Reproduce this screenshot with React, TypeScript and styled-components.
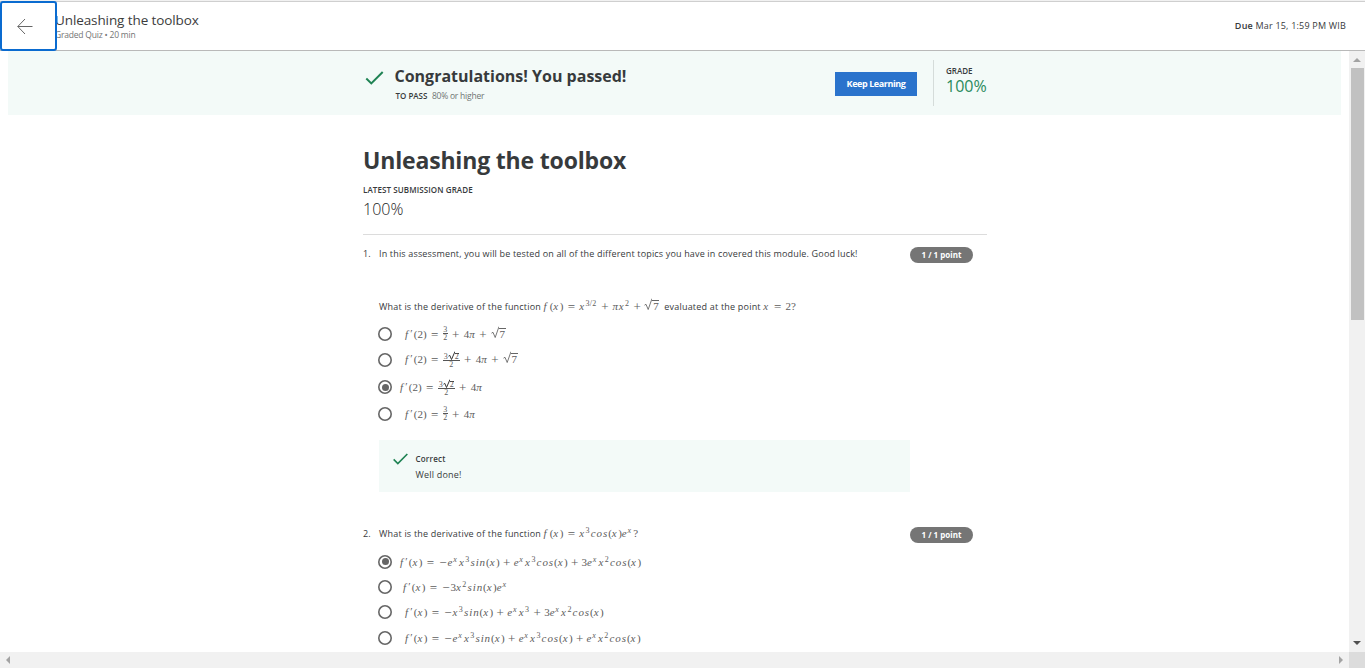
import React from 'react';
import styled, { createGlobalStyle } from 'styled-components';

const Global = createGlobalStyle`
  * { box-sizing: border-box; }
  html, body { margin: 0; padding: 0; overflow: hidden; background: #fff; }
  body { font-family: "Open Sans", "Noto Sans", sans-serif; color: #373a3c; }
`;

const Page = styled.div`
  width: 1365px;
  height: 668px;
  display: flex;
  flex-direction: column;
  overflow: hidden;
`;
const Header = styled.header`
  height: 51px;
  flex: none;
  display: flex;
  align-items: stretch;
  border-top: 1px solid #f1f1f1;
  border-bottom: 1px solid #b9b9b9;
  box-shadow: inset 0 1px 0 #cfcfcf;
`;
const BackButton = styled.button`
  width: 57px;
  height: 50px;
  flex: none;
  margin: 0;
  padding: 0 0 0 15px;
  display: flex;
  align-items: center;
  background: #fff;
  border: 2px solid #0a6bd0;
  border-radius: 3px;
  position: relative;
  z-index: 2;
`;
const HeaderTitles = styled.div`
  flex: 1;
  margin-left: -2px;
  padding-top: 10px;
`;
const Text = styled.div<{ $size: number; $line: number; $weight?: number; $color?: string; $ls?: number }>`
  font-size: ${p => p.$size}px;
  line-height: ${p => p.$line}px;
  font-weight: ${p => p.$weight ?? 400};
  color: ${p => p.$color ?? '#373a3c'};
  letter-spacing: ${p => p.$ls ?? 0}px;
  white-space: nowrap;
`;
const Due = styled(Text)`
  padding: 18px 19px 0 0;
  b { font-weight: 600; }
`;
const Middle = styled.div`
  display: flex;
  height: 601px;
`;
const Scroller = styled.main`
  width: 1349px;
  padding: 0 8px;
  overflow: hidden;
`;
const Banner = styled.section`
  height: 64px;
  background: #f3faf8;
  display: flex;
  padding-left: 357px;
`;
const CheckHolder = styled.div<{ $top: number; $width: number }>`
  width: ${p => p.$width}px;
  padding-top: ${p => p.$top}px;
  line-height: 0;
  flex: none;
`;
const Message = styled.div`
  width: 440.5px;
  padding-top: 13px;
`;
const PassLine = styled.div`
  display: flex;
  gap: 4.5px;
  padding: 3px 0 0 1px;
`;
const KeepButton = styled.button`
  margin: 21px 16px 0 0;
  width: 82px;
  height: 24px;
  flex: none;
  border: 0;
  padding: 0;
  background: #2a73cc;
  color: #fff;
  font: 700 9px/24px "Open Sans", sans-serif;
  letter-spacing: -0.42px;
  white-space: nowrap;
`;
const Grade = styled.div`
  margin-top: 9px;
  height: 46px;
  border-left: 1px solid #d5dcda;
  padding: 5px 0 0 12px;
`;
const Column = styled.div`
  width: 624px;
  margin-left: 355px;
  padding-top: 29px;
`;
const Summary = styled.div`
  height: 91px;
  border-bottom: 1px solid #dcdcdc;
`;
const Question = styled.article<{ $height: number }>`
  display: flex;
  height: ${p => p.$height}px;
  padding-top: 11px;
`;
const QuestionNumber = styled(Text)`
  width: 16px;
  flex: none;
`;
const Body = styled.div`
  width: 531px;
  flex: none;
`;
const Pill = styled.div`
  margin-top: 1px;
  width: 63px;
  height: 16px;
  border-radius: 8px;
  background: #757575;
  color: #fff;
  text-align: center;
  font-size: 8px;
  line-height: 16px;
  font-weight: 700;
`;
const Prompt = styled.div<{ $top?: number; $bottom?: number }>`
  display: flex;
  align-items: baseline;
  height: 16px;
  margin-top: ${p => p.$top ?? 0}px;
  margin-bottom: ${p => p.$bottom ?? 0}px;
`;
const Option = styled.label<{ $h: number; $gap: number }>`
  height: ${p => p.$h}px;
  display: flex;
  align-items: center;
  gap: ${p => p.$gap}px;
`;
const Ring = styled.span`
  width: 14px;
  height: 14px;
  flex: none;
  margin-left: -1px;
  border-radius: 50%;
  box-shadow: inset 0 0 0 1.6px #666;
  display: flex;
  align-items: center;
  justify-content: center;
`;
const Dot = styled.span`
  width: 7px;
  height: 7px;
  border-radius: 50%;
  background: #666;
`;
const Feedback = styled.div`
  margin-top: 15px;
  height: 52px;
  background: #f3faf8;
  display: flex;
  padding-left: 14px;
`;
const FeedbackText = styled.div`
  padding-top: 12px;
`;

/* Formula pieces */
const Formula = styled.span`
  display: inline-flex;
  align-items: baseline;
  white-space: pre;
  font: 11px/16px "Liberation Serif", serif;
  color: #5c5c5c;
`;
const V = styled.i<{ $ls?: number }>`
  letter-spacing: ${p => p.$ls ?? 0.8}px;
`;
const Sup = styled.span<{ $italic?: boolean }>`
  font-size: 8px;
  line-height: 8px;
  position: relative;
  top: -4px;
  letter-spacing: 0.2px;
  margin-right: ${p => (p.$italic ? 2 : 1)}px;
  font-style: ${p => (p.$italic ? 'italic' : 'normal')};
`;
const Prime = styled.span`
  width: 5px;
  text-align: center;
  position: relative;
  top: -1px;
`;
const Operator = styled.span<{ $w?: number }>`
  width: ${p => p.$w ?? 16}px;
  text-align: center;
  font-size: 13px;
  line-height: 14px;
  position: relative;
  top: 1px;
`;
const Fraction = styled.span<{ $w: number }>`
  width: ${p => p.$w}px;
  display: inline-flex;
  flex-direction: column;
  align-items: center;
  align-self: center;
  font-size: 8px;
  line-height: 7px;
`;
const Numerator = styled.span`
  width: 100%;
  display: flex;
  align-items: flex-end;
  justify-content: center;
  border-bottom: 1px solid #555;
`;
const RootBody = styled.span`
  line-height: 10px;
  border-top: 1px solid #666;
  padding: 0 0.5px 0 1px;
`;
const RootWrap = styled.span`
  display: inline-flex;
  align-items: baseline;
`;
const SmallRootBody = styled.span`
  border-top: 1px solid #444;
  line-height: 6px;
`;

const Root = ({ children }: { children: React.ReactNode }) => (
  <RootWrap>
    <svg width="8" height="12" viewBox="0 0 8 12" fill="none" stroke="#555" strokeWidth="0.8">
      <path d="M.5 7.2 2 6.3 4.2 11.5 8 .6" />
    </svg>
    <RootBody>{children}</RootBody>
  </RootWrap>
);
const ThreeRootTwoOverTwo = () => (
  <Fraction $w={17}>
    <Numerator>
      3
      <svg width="7" height="9" viewBox="0 0 7 9" fill="none" stroke="#333" strokeWidth="1">
        <path d="M.5 5.2 1.8 4.4 3.5 8.5 7 .5" />
      </svg>
      <SmallRootBody>2</SmallRootBody>
    </Numerator>
    2
  </Fraction>
);
const ThreeHalves = () => (
  <Fraction $w={5}>
    <Numerator>3</Numerator>2
  </Fraction>
);
const X = () => <V $ls={1.4}>x</V>;
const Fx = ({ arg, prime = true }: { arg?: string; prime?: boolean }) => (
  <>
    <V $ls={prime ? 0.8 : 3}>f</V>
    {prime && <Prime>′</Prime>}({arg ?? <X />})
  </>
);
const Ex = () => (
  <>
    <V>e</V>
    <Sup $italic>x</Sup>
  </>
);
const Xn = ({ n }: { n: string }) => (
  <>
    <X />
    <Sup>{n}</Sup>
  </>
);
const Trig = ({ name }: { name: string }) => (
  <>
    <V $ls={0.9}>{name}</V>(<X />)
  </>
);
const Eq = ({ w }: { w?: number }) => <Operator $w={w}>=</Operator>;
const Plus = ({ w }: { w?: number }) => <Operator $w={w}>+</Operator>;
const Minus = () => <Operator $w={9}>−</Operator>;

const Check = ({ w, h }: { w: number; h: number }) => (
  <svg width={w} height={h} viewBox="0 0 18 14" fill="none" stroke="#1f8354" strokeWidth="2">
    <path d="M.8 7.5 5.8 12.4 17.2 1" />
  </svg>
);

const Radio = ({ on, h, gap, children }: { on?: boolean; h: number; gap: number; children: React.ReactNode }) => (
  <Option $h={h} $gap={gap}>
    <Ring>{on && <Dot />}</Ring>
    {children}
  </Option>
);

/* Scrollbars */
const VBar = styled.div`
  width: 16px;
  background: #f1f1f1;
  display: flex;
  flex-direction: column;
  align-items: center;
`;
const VArrow = styled.div`
  height: 17px;
  width: 16px;
  display: flex;
  align-items: center;
  justify-content: center;
`;
const VThumb = styled.div`
  width: 13px;
  height: 252px;
  margin: 0 0 314px 1px;
  background: #c1c1c1;
`;
const HBar = styled.div`
  height: 16px;
  display: flex;
  background: #f1f1f1;
`;
const HTrack = styled.div`
  width: 1349px;
  padding: 0 6px;
  display: flex;
  justify-content: space-between;
  align-items: center;
`;
const Corner = styled.div`
  width: 16px;
  background: #dcdcdc;
`;

export default function App() {
  return (
    <Page>
      <Global />
      <Header>
        <BackButton aria-label="Back">
          <svg width="16" height="17" viewBox="0 0 16 17" fill="none" stroke="#666" strokeWidth="1">
            <path d="M15.5 8.5H.8M8 1 .8 8.5 8 16" />
          </svg>
        </BackButton>
        <HeaderTitles>
          <Text $size={13.5} $line={19} $color="#3c3c3c" $ls={-0.1}>Unleashing the toolbox</Text>
          <Text $size={8.5} $line={9} $color="#757575" $ls={-0.2}>Graded Quiz • 20 min</Text>
        </HeaderTitles>
        <Due $size={9} $line={14} $ls={0.2}><b>Due</b> Mar 15, 1:59 PM WIB</Due>
      </Header>
      <Middle>
        <Scroller>
          <Banner>
            <CheckHolder $top={20} $width={29.5}><Check w={19} h={14} /></CheckHolder>
            <Message>
              <Text $size={16} $line={24} $weight={700}>Congratulations! You passed!</Text>
              <PassLine>
                <Text $size={8} $line={10} $weight={600}>TO PASS</Text>
                <Text $size={8.5} $line={10} $color="#6f7573" $ls={-0.22}>80% or higher</Text>
              </PassLine>
            </Message>
            <KeepButton>Keep Learning</KeepButton>
            <Grade>
              <Text $size={8} $line={12} $weight={600}>GRADE</Text>
              <Text $size={16} $line={18} $color="#2a8a5c">100%</Text>
            </Grade>
          </Banner>
          <Column>
            <Summary>
              <Text $size={23} $line={32} $weight={700} $ls={-0.17}>Unleashing the toolbox</Text>
              <Text $size={8} $line={28} $weight={600} $ls={0.1}>LATEST SUBMISSION GRADE</Text>
              <Text $size={16} $line={10} $weight={300} $color="#222">100%</Text>
            </Summary>
            <Question $height={280}>
              <QuestionNumber $size={9} $line={16}>1.</QuestionNumber>
              <Body>
                <Prompt><Text $size={9} $line={16} $ls={0.16}>In this assessment, you will be tested on all of the different topics you have in covered this module. Good luck!</Text></Prompt>
                <Prompt $top={36} $bottom={6}>
                  <Text $size={9} $line={16} $ls={0.2}>What is the derivative of the function&nbsp;</Text>
                  <Formula>
                    <Fx prime={false} /><Eq /><Xn n="3/2" /><Plus w={15} /><V>π</V><Xn n="2" /><Plus w={14} /><Root>7</Root>
                  </Formula>
                  <Text $size={9} $line={16} $ls={0.2}>&nbsp; evaluated at the point&nbsp;</Text>
                  <Formula><X /><Eq />2?</Formula>
                </Prompt>
                <Radio h={27} gap={13}><Formula><Fx arg="2" /><Eq /><ThreeHalves /><Plus />4<V>π</V><Plus w={15} /><Root>7</Root></Formula></Radio>
                <Radio h={25} gap={13}><Formula><Fx arg="2" /><Eq /><ThreeRootTwoOverTwo /><Plus />4<V>π</V><Plus w={15} /><Root>7</Root></Formula></Radio>
                <Radio on h={30} gap={8}><Formula><Fx arg="2" /><Eq /><ThreeRootTwoOverTwo /><Plus />4<V>π</V></Formula></Radio>
                <Radio h={23} gap={13}><Formula><Fx arg="2" /><Eq /><ThreeHalves /><Plus />4<V>π</V></Formula></Radio>
                <Feedback>
                  <CheckHolder $top={13} $width={22.5}><Check w={15} h={12} /></CheckHolder>
                  <FeedbackText>
                    <Text $size={8} $line={14} $weight={600} $ls={0.2}>Correct</Text>
                    <Text $size={9} $line={18} $ls={0.2}>Well done!</Text>
                  </FeedbackText>
                </Feedback>
              </Body>
              <Pill>1 / 1 point</Pill>
            </Question>
            <Question $height={160}>
              <QuestionNumber $size={9} $line={16}>2.</QuestionNumber>
              <Body>
                <Prompt $top={-1} $bottom={8}>
                  <Text $size={9} $line={16} $ls={0.2}>What is the derivative of the function&nbsp;</Text>
                  <Formula><Fx prime={false} /><Eq /><Xn n="3" /><Trig name="cos" /><Ex />?</Formula>
                </Prompt>
                <Radio on h={25} gap={8}><Formula><Fx /><Eq /><Minus /><Ex /><Xn n="3" /><Trig name="sin" /><Plus w={14} /><Ex /><Xn n="3" /><Trig name="cos" /><Plus w={14} />3<Ex /><Xn n="2" /><Trig name="cos" /></Formula></Radio>
                <Radio h={25} gap={11}><Formula><Fx /><Eq /><Minus />3<Xn n="2" /><Trig name="sin" /><Ex /></Formula></Radio>
                <Radio h={25} gap={13}><Formula><Fx /><Eq /><Minus /><Xn n="3" /><Trig name="sin" /><Plus w={14} /><Ex /><Xn n="3" /><Plus w={14} />3<Ex /><Xn n="2" /><Trig name="cos" /></Formula></Radio>
                <Radio h={27} gap={13}><Formula><Fx /><Eq /><Minus /><Ex /><Xn n="3" /><Trig name="sin" /><Plus w={14} /><Ex /><Xn n="3" /><Trig name="cos" /><Plus w={14} /><Ex /><Xn n="2" /><Trig name="cos" /></Formula></Radio>
              </Body>
              <Pill>1 / 1 point</Pill>
            </Question>
          </Column>
        </Scroller>
        <VBar>
          <VArrow><svg width="8" height="4" viewBox="0 0 8 4" fill="#a3a3a3"><path d="M0 4 4 0 8 4z" /></svg></VArrow>
          <VThumb />
          <VArrow><svg width="8" height="4" viewBox="0 0 8 4" fill="#505050"><path d="M0 0 4 4 8 0z" /></svg></VArrow>
        </VBar>
      </Middle>
      <HBar>
        <HTrack>
          <svg width="4" height="8" viewBox="0 0 4 8" fill="#a3a3a3"><path d="M4 0 0 4 4 8z" /></svg>
          <svg width="4" height="8" viewBox="0 0 4 8" fill="#a3a3a3"><path d="M0 0 4 4 0 8z" /></svg>
        </HTrack>
        <Corner />
      </HBar>
    </Page>
  );
}
